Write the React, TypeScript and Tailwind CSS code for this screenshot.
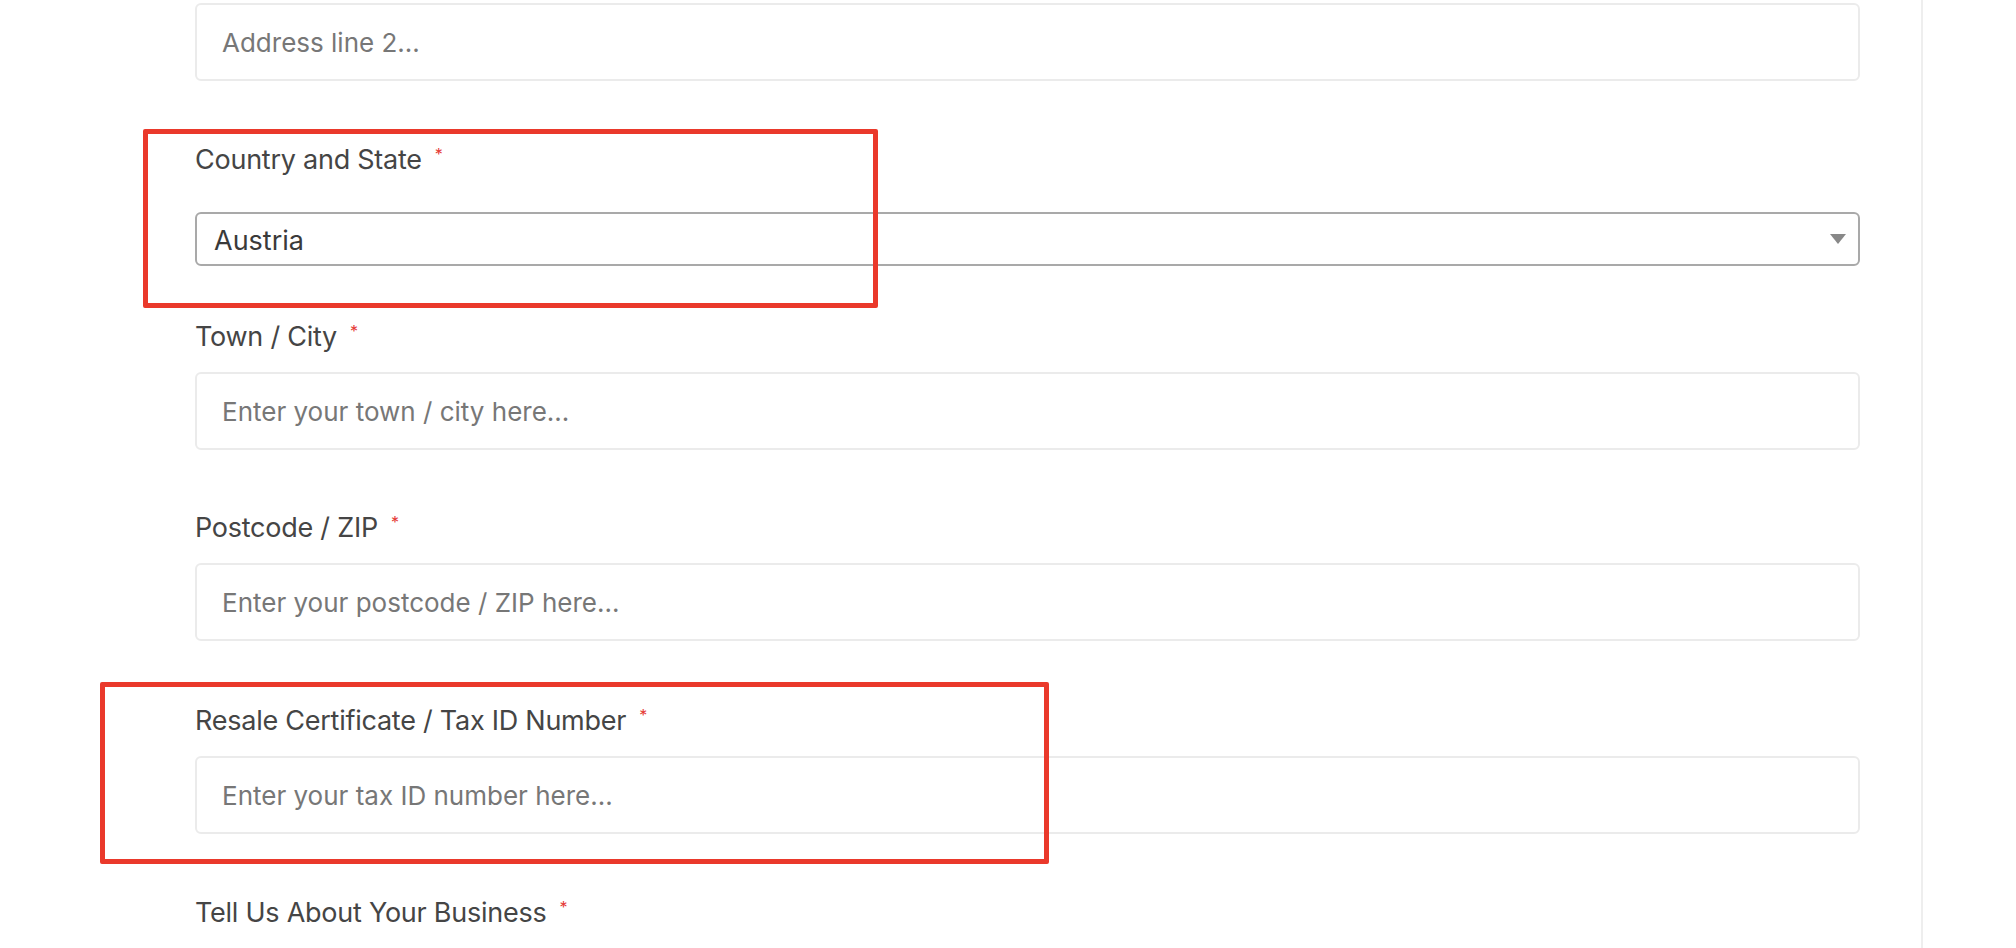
import React from "react";

const font = { fontFamily: "Inter, 'Noto Sans', Arial, sans-serif" };

function Label({ text, className = "" }: { text: string; className?: string }) {
  return (
    <div className={`flex items-start text-[27px] leading-[32px] tracking-[-0.25px] text-[#454545] ${className}`}>
      <span>{text}</span>
      <span className="ml-[13px] text-[16px] leading-[20px] text-[#e53935]">*</span>
    </div>
  );
}

function TextInput({ placeholder, className = "" }: { placeholder: string; className?: string }) {
  return (
    <input
      type="text"
      placeholder={placeholder}
      className={`block h-[78px] w-full rounded-[6px] border-2 border-[#ebebeb] bg-white pl-[25px] text-[26px] text-[#333] outline-none placeholder:text-[#777777] ${className}`}
    />
  );
}

export default function App() {
  return (
    <div className="relative h-[948px] w-full overflow-hidden bg-white" style={font}>
      <div className="flex h-full">
        <div className="w-[1921px] shrink-0 pl-[195px] pr-[61px] pt-[3px]">
          <TextInput placeholder="Address line 2..." />

          <Label text="Country and State" className="mt-[63px]" />
          <div className="mt-[36px] flex h-[54px] items-center justify-between rounded-[6px] border-2 border-[#a9a9a9] bg-white pl-[17px] pr-[12px]">
            <span className="pt-[4px] text-[27px] leading-[32px] text-[#3a3a3a]">Austria</span>
            <svg width="16" height="10" viewBox="0 0 16 10" aria-hidden="true">
              <path d="M0 0 H16 L8 10 Z" fill="#888888" />
            </svg>
          </div>

          <Label text="Town / City" className="mt-[55px]" />
          <TextInput placeholder="Enter your town / city here..." className="mt-[19px]" />

          <Label text="Postcode / ZIP" className="mt-[62px]" />
          <TextInput placeholder="Enter your postcode / ZIP here..." className="mt-[19px]" />

          <Label text="Resale Certificate / Tax ID Number" className="mt-[64px]" />
          <TextInput placeholder="Enter your tax ID number here..." className="mt-[19px]" />

          <Label text="Tell Us About Your Business" className="mt-[63px]" />
        </div>
        <div className="h-full w-[2px] shrink-0 bg-[#eeeeee]" />
        <div className="flex-1" />
      </div>

      {/* annotation boxes */}
      <div className="pointer-events-none absolute left-[143px] top-[129px] h-[179px] w-[735px] rounded-[2px] border-[5px] border-[#ea392b]" />
      <div className="pointer-events-none absolute left-[100px] top-[682px] h-[182px] w-[949px] rounded-[2px] border-[5px] border-[#ea392b]" />
    </div>
  );
}
